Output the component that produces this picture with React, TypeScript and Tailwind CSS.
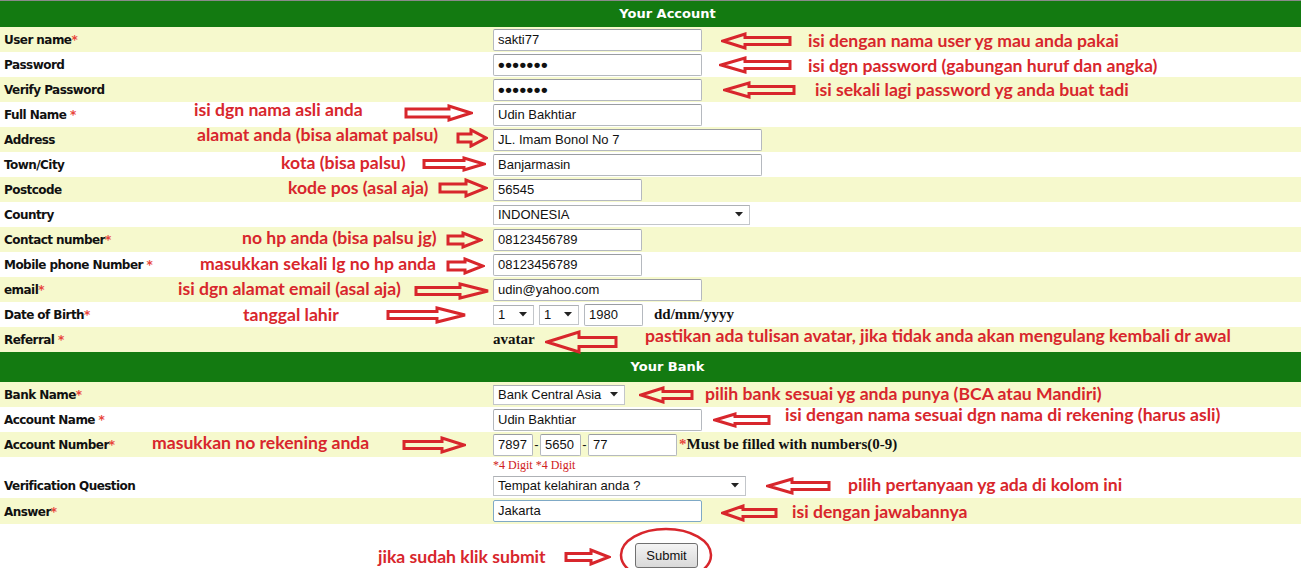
import React from "react";

const RED = "#d8262c";
const labelFont = { fontFamily: '"DejaVu Sans", Verdana, sans-serif' };

function Star({ space }: { space?: boolean }) {
  return <span className="text-[#e8453c] font-bold">{space ? " *" : "*"}</span>;
}

function Row({
  label,
  star,
  yellow,
  h = 25,
  children,
}: {
  label: string;
  star?: "tight" | "space";
  yellow?: boolean;
  h?: number;
  children?: React.ReactNode;
}) {
  return (
    <div
      className={`flex items-center ${yellow ? "bg-[#f6f9cd]" : "bg-white"}`}
      style={{ height: h }}
    >
      <div
        className="w-[493px] pl-[4px] pt-[1px] text-[12px] tracking-[-0.55px] font-bold text-[#111]"
        style={labelFont}
      >
        {label}
        {star && <Star space={star === "space"} />}
      </div>
      <div className="flex items-center">{children}</div>
    </div>
  );
}

function Input({ w, value, dots, focus }: { w: number; value?: string; dots?: boolean; focus?: boolean }) {
  return (
    <div
      className={`h-[22px] border ${focus ? "border-[#7fa9c6]" : "border-[#b5b9bf] border-t-[#9a9da2]"} rounded-[2px] bg-white flex items-center pl-[4px] text-[13px] text-[#111] overflow-hidden whitespace-nowrap`}
      style={{ width: w, fontFamily: '"Liberation Sans", Arial, sans-serif' }}
    >
      {dots ? (
        <span className="text-[19px] leading-none tracking-[0.5px] font-bold">•••••••</span>
      ) : (
        value
      )}
    </div>
  );
}

function Select({ w, value }: { w: number; value: string }) {
  return (
    <div
      className="h-[20px] border border-[#c3c6ca] border-t-[#aeb1b5] bg-white flex items-center justify-between pl-[4px] pr-[6px] text-[13px] text-[#111] whitespace-nowrap"
      style={{ width: w, fontFamily: '"Liberation Sans", Arial, sans-serif' }}
    >
      <span>{value}</span>
      <svg width="8" height="5" viewBox="0 0 8 5">
        <path d="M0 0 L8 0 L4 4.5 Z" fill="#222" />
      </svg>
    </div>
  );
}

function Header({ title, h }: { title: string; h: number }) {
  return (
    <div
      className="bg-[#137a11] flex items-center justify-center pl-[34px] text-white text-[13px] font-bold"
      style={{ height: h, ...labelFont }}
    >
      {title}
    </div>
  );
}

function Arrow({
  x1,
  x2,
  y,
  dir,
  head = 22,
  hh = 16,
  sh = 8,
}: {
  x1: number;
  x2: number;
  y: number;
  dir: "l" | "r";
  head?: number;
  hh?: number;
  sh?: number;
}) {
  const W = x2 - x1;
  const H = hh + 4;
  const m = H / 2;
  let d: string;
  if (dir === "r") {
    const xh = W - head;
    d = `M2 ${m - sh / 2} L${xh} ${m - sh / 2} L${xh} 2 L${W - 2} ${m} L${xh} ${H - 2} L${xh} ${m + sh / 2} L2 ${m + sh / 2} Z`;
  } else {
    const xh = head;
    d = `M${W - 2} ${m - sh / 2} L${xh} ${m - sh / 2} L${xh} 2 L2 ${m} L${xh} ${H - 2} L${xh} ${m + sh / 2} L${W - 2} ${m + sh / 2} Z`;
  }
  return (
    <svg
      className="absolute"
      style={{ left: x1, top: y - m }}
      width={W}
      height={H}
      viewBox={`0 0 ${W} ${H}`}
    >
      <path d={d} fill="none" stroke={RED} strokeWidth="3" strokeLinejoin="miter" />
    </svg>
  );
}

function Note({ x, y, text }: { x: number; y: number; text: string }) {
  return (
    <div
      className="absolute whitespace-nowrap text-[17.6px] font-bold leading-[22px]"
      style={{ left: x, top: y - 11, color: RED, fontFamily: 'Lato, "Open Sans", sans-serif' }}
    >
      {text}
    </div>
  );
}

export default function App() {
  return (
    <div className="relative w-[1301px] h-[568px] overflow-hidden bg-white">
      <div className="h-[1px] bg-[#8a8a8a]" />
      <Header title="Your Account" h={26} />
      <Row label="User name" star="tight" yellow>
        <Input w={209} value="sakti77" />
      </Row>
      <Row label="Password">
        <Input w={209} dots />
      </Row>
      <Row label="Verify Password" yellow>
        <Input w={209} dots />
      </Row>
      <Row label="Full Name" star="space">
        <Input w={209} value="Udin Bakhtiar" />
      </Row>
      <Row label="Address" yellow>
        <Input w={269} value="JL. Imam Bonol No 7" />
      </Row>
      <Row label="Town/City">
        <Input w={269} value="Banjarmasin" />
      </Row>
      <Row label="Postcode" yellow>
        <Input w={149} value="56545" />
      </Row>
      <Row label="Country">
        <Select w={257} value="INDONESIA" />
      </Row>
      <Row label="Contact number" star="tight" yellow>
        <Input w={149} value="08123456789" />
      </Row>
      <Row label="Mobile phone Number" star="space">
        <Input w={149} value="08123456789" />
      </Row>
      <Row label="email" star="tight" yellow>
        <Input w={209} value="udin@yahoo.com" />
      </Row>
      <Row label="Date of Birth" star="tight">
        <div className="flex items-center">
          <Select w={41} value="1" />
          <div className="w-[5px]" />
          <Select w={40} value="1" />
          <div className="w-[5px]" />
          <Input w={59} value="1980" />
          <span
            className="ml-[11px] text-[15px] font-bold text-[#111]"
            style={{ fontFamily: '"Liberation Serif", "Times New Roman", serif' }}
          >
            dd/mm/yyyy
          </span>
        </div>
      </Row>
      <Row label="Referral" star="space" yellow>
        <span
          className="text-[15px] font-bold text-[#111]"
          style={{ fontFamily: '"Liberation Serif", "Times New Roman", serif' }}
        >
          avatar
        </span>
      </Row>
      <Header title="Your Bank" h={30} />
      <Row label="Bank Name" star="tight" yellow>
        <Select w={132} value="Bank Central Asia" />
      </Row>
      <Row label="Account Name" star="space">
        <Input w={209} value="Udin Bakhtiar" />
      </Row>
      <Row label="Account Number" star="tight" yellow>
        <div
          className="flex items-center text-[13px] text-[#111]"
          style={{ fontFamily: '"Liberation Sans", Arial, sans-serif' }}
        >
          <Input w={40} value="7897" />
          <span className="w-[7px] text-center">-</span>
          <Input w={41} value="5650" />
          <span className="w-[7px] text-center">-</span>
          <Input w={89} value="77" />
          <span
            className="ml-[2px] text-[15px] font-bold"
            style={{ fontFamily: '"Liberation Serif", "Times New Roman", serif' }}
          >
            <span className="text-[#e8453c]">*</span>Must be filled with numbers(0-9)
          </span>
        </div>
      </Row>
      <div className="h-[16px] bg-white flex items-center">
        <div className="w-[493px]" />
        <span
          className="text-[12px] text-[#d02020]"
          style={{ fontFamily: '"Liberation Serif", "Times New Roman", serif' }}
        >
          *4 Digit *4 Digit
        </span>
      </div>
      <Row label="Verification Question">
        <Select w={253} value="Tempat kelahiran anda ?" />
      </Row>
      <Row label="Answer" star="tight" yellow h={26}>
        <Input w={209} value="Jakarta" focus />
      </Row>
      <div className="flex pl-[635px] pt-[19px]">
        <div
          className="w-[63px] h-[25px] rounded-[3px] border border-[#707070] bg-gradient-to-b from-[#f4f4f4] to-[#d9d9d9] flex items-center justify-center text-[13px] text-[#111]"
          style={{ fontFamily: '"Liberation Sans", Arial, sans-serif' }}
        >
          Submit
        </div>
      </div>

      {/* annotation overlay */}
      <div className="absolute inset-0 pointer-events-none">
        <Arrow x1={721} x2={792} y={41} dir="l" head={24} hh={14} sh={7} />
        <Note x={808} y={41} text="isi dengan nama user yg mau anda pakai" />
        <Arrow x1={719} x2={792} y={65} dir="l" head={26} hh={14} sh={7} />
        <Note x={808} y={66} text="isi dgn password (gabungan huruf dan angka)" />
        <Arrow x1={723} x2={796} y={90} dir="l" head={26} hh={14} sh={7} />
        <Note x={815} y={90} text="isi sekali lagi password yg anda buat tadi" />

        <Note x={194} y={110} text="isi dgn nama asli anda" />
        <Arrow x1={404} x2={473} y={113} dir="r" head={24} hh={14} sh={8} />
        <Note x={197} y={135} text="alamat anda (bisa alamat palsu)" />
        <Arrow x1={456} x2={488} y={138} dir="r" head={17} hh={16} sh={8} />
        <Note x={281} y={163} text="kota (bisa palsu)" />
        <Arrow x1={422} x2={486} y={164} dir="r" head={22} hh={12} sh={7} />
        <Note x={288} y={188} text="kode pos (asal aja)" />
        <Arrow x1={438} x2={488} y={188} dir="r" head={22} hh={16} sh={8} />
        <Note x={242} y={238} text="no hp anda (bisa palsu jg)" />
        <Arrow x1={446} x2={483} y={240} dir="r" head={20} hh={14} sh={8} />
        <Note x={200} y={264} text="masukkan sekali lg no hp anda" />
        <Arrow x1={446} x2={485} y={266} dir="r" head={20} hh={14} sh={8} />
        <Note x={178} y={289} text="isi dgn alamat email (asal aja)" />
        <Arrow x1={414} x2={490} y={291} dir="r" head={30} hh={14} sh={7} />
        <Note x={243} y={315} text="tanggal lahir" />
        <Arrow x1={386} x2={467} y={315} dir="r" head={30} hh={14} sh={7} />

        <Arrow x1={545} x2={618} y={342} dir="l" head={34} hh={20} sh={9} />
        <Note x={645} y={336} text="pastikan ada tulisan avatar, jika tidak anda akan mengulang kembali dr awal" />

        <Arrow x1={639} x2={694} y={395} dir="l" head={24} hh={14} sh={7} />
        <Note x={705} y={394} text="pilih bank sesuai yg anda punya (BCA atau Mandiri)" />
        <Arrow x1={713} x2={771} y={420} dir="l" head={22} hh={12} sh={7} />
        <Note x={785} y={415} text="isi dengan nama sesuai dgn nama di rekening (harus asli)" />
        <Note x={152} y={443} text="masukkan no rekening anda" />
        <Arrow x1={402} x2={466} y={445} dir="r" head={24} hh={14} sh={7} />
        <Arrow x1={766} x2={831} y={486} dir="l" head={26} hh={14} sh={7} />
        <Note x={848} y={485} text="pilih pertanyaan yg ada di kolom ini" />
        <Arrow x1={721} x2={778} y={513} dir="l" head={22} hh={14} sh={7} />
        <Note x={792} y={512} text="isi dengan jawabannya" />
        <Note x={378} y={557} text="jika sudah klik submit" />
        <Arrow x1={564} x2={611} y={557} dir="r" head={20} hh={14} sh={7} />
        <svg className="absolute" style={{ left: 615, top: 524 }} width="104" height="60" viewBox="0 0 104 60">
          <ellipse cx="51" cy="31" rx="45" ry="26" fill="none" stroke={RED} strokeWidth="2.5" />
        </svg>
      </div>
    </div>
  );
}
